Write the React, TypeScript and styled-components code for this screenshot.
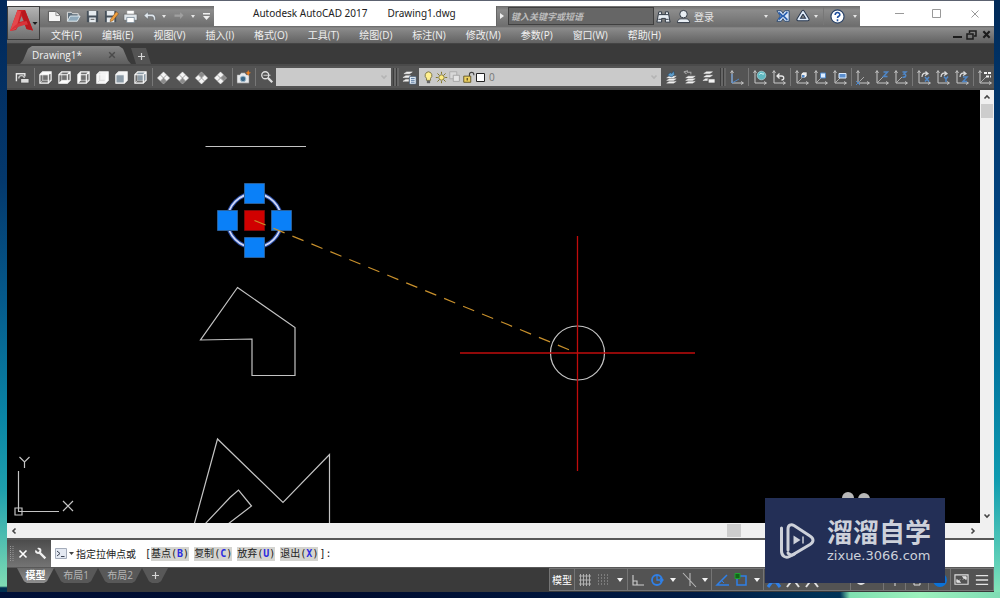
import React from "react";
import styled, { createGlobalStyle, css } from "styled-components";

const uiFont = `"Open Sans", "Noto Sans CJK SC", sans-serif`;
const monoFont = `"DejaVu Sans Mono", "Noto Sans CJK SC", monospace`;

const GlobalStyle = createGlobalStyle`
  * { box-sizing: border-box; }
  body { margin: 0; font-family: ${uiFont}; font-size: 10px; }
  button, input, select { font: inherit; color: inherit; margin: 0; padding: 0; border: 0; background: none; border-radius: 0; }
  svg { display: block; flex: none; }
`;

/* ---------- frame ---------- */

const Desktop = styled.div`
  min-height: 100vh;
  display: flex;
  padding: 0 6px 6px 7px;
  background:
    linear-gradient(30deg, #001038 0%, #000a2c 30%, #001c46 70%, #003358 82%, #00335800 84%) 0 100% / 100% 6px no-repeat,
    linear-gradient(90deg, #00103a 0%, #000a2c 40%, #001c46 70%, #003358 84%, #7fe0b0 85%, #9cf0bc 92%, #7fdcb4 100%) 0 100% / 100% 6px no-repeat,
    linear-gradient(#01285a 0%, #04386c 30%, #055a8c 50%, #0a86a6 70%, #1f9fac 82%, #7fdcb4 98%, #003050 98.3%) 0 0 / 7px 100% no-repeat,
    linear-gradient(#012a58 0%, #014380 35%, #0277a0 62%, #0f9bb0 80%, #5fd0b8 94%, #8ae8b8 100%) 100% 0 / 6px 100% no-repeat,
    #001038;
`;

const Window = styled.main`
  position: relative;
  flex: 1;
  min-width: 0;
  display: flex;
  flex-direction: column;
  background: #3a3a3a;
  border-top: 1px solid #5c6270;
`;

const Header = styled.header`
  display: grid;
  grid-template-columns: 33px 1fr;
  grid-template-rows: 25px 18px;
  background: #fff;
`;

const AppButton = styled.button`
  grid-area: 1 / 1 / 3 / 2;
  z-index: 1;
  margin: 5px 0 4px;
  display: flex;
  align-items: center;
  border: 1px solid #3c3c3c;
  background: linear-gradient(#b4b4b4, #6e6e6e);
`;

const TitleRow = styled.div`
  grid-area: 1 / 2 / 2 / 3;
  display: flex;
  align-items: flex-end;
`;

const barFill = css`
  height: 20px;
  display: flex;
  align-items: center;
  background: linear-gradient(#6e6e6e, #8c8c8c 20%, #6e6e6e);
`;

const QuickAccess = styled.nav`
  ${barFill}
  width: 174px;
  padding-left: 5px;
`;

const ToolButton = styled.button<{ $w?: number }>`
  width: ${(p) => p.$w ?? 19}px;
  height: 18px;
  flex: none;
  display: flex;
  align-items: center;
  justify-content: center;
`;

const Title = styled.h1`
  flex: 1;
  margin: 0;
  padding-left: 39px;
  display: flex;
  gap: 20px;
  font-family: "Noto Sans", sans-serif;
  font-size: 10px;
  font-weight: 400;
  line-height: 25px;
  white-space: nowrap;
  color: #222;
`;

const InfoCenter = styled.div`
  ${barFill}
  width: 364px;
  padding-left: 2px;
  border-left: 1px solid #666;
`;

const Search = styled.input`
  width: 146px;
  height: 18px;
  margin-left: 2px;
  padding-left: 2px;
  border: 1px solid #3f3f3f;
  background: #666;
  font-size: 9px;
  font-style: italic;
  font-weight: 700;
  &::placeholder { color: #bcbcbc; opacity: 1; }
`;

const SignIn = styled.button`
  display: flex;
  align-items: center;
  gap: 3px;
  margin: 0 auto 0 3px;
  color: #e6e6e6;
`;

const WindowButtons = styled.div`
  height: 25px;
  display: flex;
  align-items: center;
  margin-left: 21px;
  color: #999;
`;

const MenuBar = styled.nav`
  grid-area: 2 / 1 / 3 / 3;
  display: flex;
  align-items: center;
  padding-left: 44px;
  gap: 20px;
  background: linear-gradient(#666, #8b8b8b 12%, #626262);
  border-bottom: 1px solid #444;
  color: #f0f0f0;
  white-space: nowrap;
`;

const DocButtons = styled.div`
  margin-left: auto;
  display: flex;
  color: #1c1c1c;
`;

/* ---------- tabs and toolbar ---------- */

const FileTabs = styled.div`
  height: 20px;
  display: flex;
  align-items: flex-end;
  padding-left: 13px;
  background: #3a3a3a;
`;

const FileTab = styled.div`
  width: 111px;
  height: 18px;
  display: flex;
  align-items: center;
  justify-content: space-between;
  padding: 0 15px 0 12px;
  color: #f2f2f2;
  background: linear-gradient(#858585, #5e5e5e);
  clip-path: polygon(0 100%, 3px 80%, 8px 15%, 12px 0, 99px 0, 103px 15%, 108px 80%, 100% 100%);
`;

const NewTab = styled.button`
  width: 20px;
  height: 16px;
  display: flex;
  align-items: center;
  justify-content: center;
  background: #545454;
  clip-path: polygon(0 0, 15px 0, 100% 100%, 5px 100%);
`;

const Toolbar = styled.div`
  height: 26px;
  display: flex;
  align-items: center;
  padding-left: 6px;
  background: #545454;
  border-top: 2px solid #4a4a4a;
  border-bottom: 2px solid #4a4a4a;
  overflow: hidden;
`;

const Sep = styled.span`
  width: 4px;
  height: 18px;
  flex: none;
  background: linear-gradient(#777, #777) 50% / 1px 100% no-repeat;
`;

const Grip = styled.span`
  width: 9px;
  height: 18px;
  flex: none;
  background: repeating-linear-gradient(90deg, #3c3c3c 0 1px, #666 1px 3px) 50% / 6px 100% no-repeat;
`;

const Combo = styled.div<{ $w?: number }>`
  ${(p) => (p.$w ? `width: ${p.$w}px; flex: none;` : "flex: 1; min-width: 0;")}
  height: 18px;
  display: flex;
  align-items: center;
  padding: 0 3px;
  background: #cacaca;
  color: #777;
  select { flex: 1; min-width: 0; height: 18px; appearance: none; outline: 0; font-size: 10px; padding-left: 4px; }
`;

/* ---------- drawing area ---------- */

const Workspace = styled.section`
  flex: 1;
  min-height: 300px;
  display: grid;
  grid-template-columns: 1fr 14px;
  grid-template-rows: 1fr 15px;
  background: #f0f0f0;
`;

const Canvas = styled.div`
  position: relative;
  overflow: hidden;
  background: #000;
  svg { position: absolute; inset: 0; width: 100%; height: 100%; }
`;

const VScroll = styled.div`
  display: flex;
  flex-direction: column;
  justify-content: space-between;
  color: #444;
`;

const HScroll = styled.div`
  grid-column: 1 / 3;
  display: flex;
  align-items: center;
  justify-content: space-between;
  padding: 0 15px 0 0;
  color: #444;
`;

const ScrollButton = styled.button`
  width: 13px;
  height: 14px;
  display: flex;
  align-items: center;
  justify-content: center;
`;

const VThumb = styled.div`
  height: 14px;
  margin: 0 1px auto;
  background: #cdcdcd;
`;

const HThumb = styled.div`
  width: 14px;
  height: 13px;
  margin: 0 225px 0 auto;
  background: #cdcdcd;
`;

/* ---------- command line and status bar ---------- */

const CommandLine = styled.form`
  height: 30px;
  display: flex;
  border-top: 2px solid #585858;
  border-bottom: 1px solid #585858;
  background: #fff;
  font-family: ${monoFont};
  color: #222;
  white-space: nowrap;
`;

const CommandHandle = styled.div`
  width: 44px;
  display: flex;
  align-items: center;
  padding-left: 2px;
  background: linear-gradient(#4c4c4c, #747474);
`;

const CommandText = styled.label`
  display: flex;
  align-items: center;
  padding-left: 4px;
`;

const Options = styled.div`
  display: flex;
  align-items: center;
`;

const Prompt = styled.span`
  padding: 0 9px 0 1px;
`;

const Option = styled.button`
  height: 14px;
  margin-right: 5px;
  line-height: 14px;
  background: #d4d4d0;
  b { color: #2b2be0; }
  &:last-of-type { margin-right: 1px; }
`;

const CommandInput = styled.input`
  flex: 1;
  min-width: 0;
  outline: 0;
`;

const Status = styled.footer`
  height: 24px;
  display: flex;
  align-items: flex-start;
  padding-left: 10px;
  background: #3a3a3a;
`;

const LayoutTab = styled.button<{ $active?: boolean; $w?: number }>`
  width: ${(p) => p.$w ?? 44}px;
  height: 15px;
  line-height: 15px;
  display: flex;
  justify-content: center;
  align-items: center;
  color: ${(p) => (p.$active ? "#fff" : "#b4b4b4")};
  font-weight: ${(p) => (p.$active ? 700 : 400)};
  background: ${(p) => (p.$active ? "linear-gradient(#6a6a6a, #8e8e8e)" : "#585858")};
  clip-path: polygon(0 0, 100% 0, calc(100% - 7px) 88%, calc(100% - 10px) 100%, 10px 100%, 7px 88%);
`;

const StatusTools = styled.div`
  height: 23px;
  margin-left: auto;
  display: flex;
  align-items: center;
  background: #535353;
  border: 1px solid #757575;
`;

const StatusSep = styled.span`
  width: 1px;
  height: 21px;
  background: #757575;
`;

const ModelButton = styled.button`
  width: 24px;
  height: 19px;
  color: #fff;
  white-space: nowrap;
`;

const Watermark = styled.aside`
  position: absolute;
  right: 49px;
  bottom: 9px;
  width: 180px;
  height: 85px;
  display: flex;
  align-items: center;
  gap: 12px;
  padding-left: 14px;
  background: #232f56;
  color: #cdd1da;
`;

const WatermarkName = styled.strong`
  display: block;
  font-family: "Liberation Sans", "Noto Sans CJK SC", sans-serif;
  font-size: 26px;
  line-height: 30px;
  font-weight: 700;
`;

const WatermarkUrl = styled.span`
  display: block;
  font-family: "DejaVu Sans", sans-serif;
  font-size: 13px;
  line-height: 15px;
`;

/* ---------- icons ---------- */

const Ico = ({ children, s = 16 }: { children: React.ReactNode; s?: number }) => (
  <svg width={s} height={s} viewBox="0 0 16 16" fill="none" aria-hidden="true">{children}</svg>
);

const Caret = ({ w = 13 }: { w?: number }) => (
  <ToolButton $w={w} aria-label="More options" type="button">
    <svg width="6" height="4" viewBox="0 0 6 4"><path d="M0 0h6L3 4z" fill="#f2f2f2" /></svg>
  </ToolButton>
);

const SmallCaret = () => (
  <ToolButton $w={10} aria-label="More" type="button">
    <svg width="4" height="3" viewBox="0 0 4 3"><path d="M0 0h4L2 3z" fill="#e6e6e6" /></svg>
  </ToolButton>
);

const Chevron = ({ r = 0, c = "currentColor" }: { r?: number; c?: string }) => (
  <svg width="8" height="8" viewBox="0 0 8 8" fill="none" aria-hidden="true">
    <path d="M1.500 5.500L4 3l2.500 2.500" stroke={c} strokeWidth="1.600" transform={`rotate(${r} 4 4)`} />
  </svg>
);

const Plus = () => (
  <svg width="9" height="9" viewBox="0 0 9 9" aria-hidden="true"><path d="M4.500 1v7M1 4.500h7" stroke="#d6d6d6" strokeWidth="1.200" /></svg>
);

const cubeFaces: Record<string, string> = {
  top: "M2 5L5 2h9l-3 3z",
  bottom: "M2 14L5 11h9l-3 3z",
  left: "M2 5L5 2v9L2 14z",
  right: "M11 5l3-3v9l-3 3z",
  front: "M2 5h9v9H2z",
  back: "M5 2h9v9H5z",
};

const Cube = ({ face }: { face: string }) => (
  <Ico s={15}>
    <path d="M2 5L5 2h9v9l-3 3H2z" fill={face === "front" || face === "right" ? "#f4f4f4" : "#707070"} />
    {face !== "front" && <path d="M5 2v9h9M5 11l-3 3" stroke="#d0d0d0" strokeWidth=".8" />}
    <path d={cubeFaces[face]} fill={face === "front" || face === "back" ? "#8b9aa6" : "#fff"} />
    <path d="M2 5h9v9H2zM2 5l3-3h9v9l-3 3M11 5l3-3" stroke="#f8f8f8" strokeWidth="1.200" />
  </Ico>
);

/* A tilted cube seen as four tiles, one of them shaded. */
const isoTiles = ["M8 2l3 3-3 3-3-3z", "M11.500 5.500l3 3-3 3-3-3z", "M8 9l3 3-3 3-3-3z", "M4.500 5.500l3 3-3 3-3-3z"];

const Iso = ({ dark }: { dark: number }) => (
  <Ico s={15}>
    {isoTiles.map((d, i) => (
      <path key={d} d={d} fill={i === dark ? "#8a8a8a" : "#f4f4f4"} stroke={i === dark ? "#d0d0d0" : "#f4f4f4"} strokeWidth=".5" />
    ))}
  </Ico>
);

const Axes = ({ children }: { children?: React.ReactNode }) => (
  <Ico s={16}>
    <path d="M3 2v12h11" stroke="#c8c8c8" />
    <path d="M1.500 4L3 1.500 4.500 4M12 12.500l2.500 1.500-2.500 1.500" stroke="#c8c8c8" strokeWidth=".9" />
    {children}
  </Ico>
);

const blue = "#4f86c6";
const Diag = () => <path d="M3 14l6-6" stroke="#b4b4b4" strokeWidth=".9" />;
const Turn = () => <path d="M6 8c0-4 3-4.500 5-3.500M9.500 2.500L12 4.700 9 6.500" stroke="#dcdcdc" strokeWidth="1.200" />;
const AxisX = () => <path d="M9 8l4 4.500M13 8l-4 4.500" stroke={blue} strokeWidth="1.500" />;
const AxisY = () => <path d="M9 7.500l2 2.500 2-2.500M11 10v3" stroke={blue} strokeWidth="1.500" />;
const AxisZ = () => <path d="M9 8h4l-4 4.500h4" stroke={blue} strokeWidth="1.500" />;

const LayerStack = () => (
  <path d="M3 9l3-2h8l-3 2zM3 12l3-2h8l-3 2zM3 15l3-2h8l-3 2z" fill="#f0f0f0" stroke="#f0f0f0" strokeWidth=".4" />
);

const Cross = ({ c = "currentColor", s = 10, w = 1.5 }: { c?: string; s?: number; w?: number }) => (
  <svg width={s} height={s} viewBox="0 0 10 10" aria-hidden="true"><path d="M1.500 1.500l7 7M8.500 1.500l-7 7" stroke={c} strokeWidth={w} /></svg>
);

/* ---------- data ---------- */

const menus = ["文件(F)", "编辑(E)", "视图(V)", "插入(I)", "格式(O)", "工具(T)", "绘图(D)", "标注(N)", "修改(M)", "参数(P)", "窗口(W)", "帮助(H)"];

const quickTools: [string, React.ReactNode][] = [
  ["New", <><path d="M1.500 2.500h8l5 4.500v6.500h-13z" fill="#f4f4f4" stroke="#505050" /><path d="M9.500 2.500V7h5" stroke="#888" /></>],
  ["Open", <><path d="M1.500 13V3.500h4L7 5h6v3" fill="#5f6f7c" stroke="#e4e4e4" /><path d="M4.500 7.500H15L12 13H1.500z" fill="#8fa9bb" stroke="#e4edf2" /></>],
  ["Save", <><path d="M2 2h12v12H2z" fill="#46505a" /><path d="M4 2h8v5H4zM4.500 9h7v5h-7z" fill="#e6ebef" /><path d="M6 11h4" stroke="#555" /></>],
  ["Save As", <><path d="M1 2h12v12H1z" fill="#46505a" /><path d="M3 2h8v5H3zM3 9h8v5H3z" fill="#e6ebef" /><path d="M7 11l6-8 2.500 2L9.500 12.500 6.500 13.500z" fill="#f0a040" stroke="#704010" strokeWidth=".5" /></>],
  ["Print", <><path d="M4 1.500h8V6H4z" fill="#fff" stroke="#777" strokeWidth=".6" /><path d="M1 5.500h14V12H1z" fill="#dfe5ea" stroke="#555" strokeWidth=".6" /><path d="M4 9h8v5.500H4z" fill="#fff" stroke="#6f8090" strokeWidth=".8" /></>],
  ["Undo", <path d="M2 7l4.500-4v2.500H10c3.500 0 4.500 2 4.500 6.500h-2c0-3-.5-4-2.500-4H6.500V11z" fill="#dfe6ec" stroke="#565c62" strokeWidth=".5" />],
];

const viewFaces = ["top", "bottom", "left", "right", "front", "back"];

const ucsGroups: [string, React.ReactNode][][] = [
  [["World UCS", <><circle cx="9.500" cy="6.500" r="4.300" fill="#5fb8c0" stroke="#bfe6ea" strokeWidth=".6" /><path d="M7.500 5.500c2-3 3 1 4.500-1" stroke="#e8ffff" /></>],
   ["Previous UCS", <path d="M6.500 7h4c3 0 3 4 0 4M8.500 4.500L6 7l2.500 2.500" stroke="#e8e8e8" strokeWidth="1.300" />]],
  [["Face UCS", <><Diag /><path d="M7 5l2-2h4v4l-2 2H7z" fill="#eee" stroke="#444" strokeWidth=".6" /><path d="M8 6h2.500v2.500H8z" fill={blue} /></>],
   ["Object UCS", <><Diag /><path d="M7.500 4h5v5h-5z" fill="#dcecff" stroke={blue} /></>],
   ["View UCS", <><Diag /><path d="M7 4.500h7V9H7z" fill="#5b8fd0" stroke="#dcecff" /></>]],
  [["Origin", <><Diag /><path d="M1 12l4 4M5 12l-4 4" stroke={blue} /></>],
   ["Z Axis Vector", <><Diag /><path d="M9.500 3h4l-4 4.500h4" stroke={blue} strokeWidth="1.500" /></>],
   ["3 Point", <><Diag /><path d="M9.500 3h3.500l-2 2c3 0 2 4-1.500 3" stroke={blue} strokeWidth="1.500" /></>]],
  [["Rotate X", <><Turn /><AxisX /></>], ["Rotate Y", <><Turn /><AxisY /></>], ["Rotate Z", <><Turn /><AxisZ /></>]],
];

const commandOptions: [string, string][] = [["基点", "B"], ["复制", "C"], ["放弃", "U"], ["退出", "X"]];

/* ---------- page ---------- */

const Drawing = () => (
  <Canvas role="img" aria-label="Drawing area">
    <svg fill="none" stroke="#c4c4c4" strokeWidth="1.200">
      <g transform="translate(-7 -90)">
        <path d="M205.500 146.500H306" />
        <path d="M237.500 287.500L295 327.500V375.500H252V339L200.500 340z" />
        <path d="M194 525L217.500 439L283 502.500L329.500 454.500V525" />
        <path d="M205 524L230 497.500L238.500 490L251.500 506L228 524" />
        <circle cx="254.500" cy="220.500" r="27" stroke="#2448a0" strokeWidth="4" />
        <circle cx="254.500" cy="220.500" r="27" stroke="#d0d8f8" strokeWidth="1.800" />
        <g fill="#0a80f8" stroke="#2a5f98" strokeWidth="1">
          <path d="M244.500 183.500h20v20h-20zM217.500 210.500h20v20h-20zM271.500 210.500h20v20h-20zM244.500 237.500h20v20h-20z" />
          <path d="M244.500 210.500h20v20h-20z" fill="#d00000" stroke="#800808" />
        </g>
        <path d="M254.500 220.500L577 353" stroke="#c8902c" strokeDasharray="12 8.500" />
        <circle cx="577.500" cy="353" r="27" />
        <path d="M577.500 236V471M460 353H695" stroke="#c00c0c" strokeWidth="1.300" />
        <path d="M18.500 471V511.500H59M15 508h7v7h-7zM19.500 457l5 5 5-5M24.500 462v6M63 501l10 10M73 501l-10 10" />
        <g fill="#b8b8b8" stroke="none">
          <ellipse cx="848" cy="498" rx="6" ry="6" />
          <ellipse cx="864" cy="499" rx="6" ry="6" />
        </g>
      </g>
    </svg>
  </Canvas>
);

const StatusIcon = ({ label, children }: { label: string; children: React.ReactNode }) => (
  <ToolButton $w={19} aria-label={label} type="button"><Ico>{children}</Ico></ToolButton>
);

const person = "M8 3v4l-6 8M8 7l6 8M4 10h8";

export default function App() {
  return (
    <Desktop>
      <GlobalStyle />
      <Window>
        <Header>
          <AppButton aria-label="Application menu">
            <svg width="31" height="32" viewBox="0 0 31 32" aria-hidden="true">
              <path d="M2 24L9.500 3H17l8 20.500-6.500-1.500-2-5-5.500 1-3 5z" fill="#cf2026" />
              <path d="M9.500 3L13 4.500 10 15l-2 7-6 2z" fill="#e4484c" />
              <path d="M17 3l8 20.500-6.500-1.500L13 5z" fill="#b8181e" />
              <path d="M13.500 9l-2 6 4-1z" fill="#8f8f8f" />
              <path d="M3.500 22c4-5 9-7 15-8l1.500 3.500C14 18 9 20 2 24z" fill="#d8343a" />
              <path d="M24.500 15h5L27 18z" fill="#1c1c1c" />
            </svg>
          </AppButton>
          <TitleRow>
            <QuickAccess aria-label="Quick access">
              {quickTools.map(([label, art]) => (
                <ToolButton key={label} aria-label={label}><Ico s={15}>{art}</Ico></ToolButton>
              ))}
              <SmallCaret />
              <ToolButton aria-label="Redo"><Ico s={12}><path d="M14 7l-4.500-4v3H2v3h7.500v3z" fill="#a0a0a0" /></Ico></ToolButton>
              <SmallCaret />
              <ToolButton $w={16} aria-label="Customize">
                <svg width="7" height="7" viewBox="0 0 7 7"><path d="M0 0h7v1.500H0zM0 3h7L3.500 7z" fill="#f0f0f0" /></svg>
              </ToolButton>
            </QuickAccess>
            <Title><span>Autodesk AutoCAD 2017</span><span>Drawing1.dwg</span></Title>
            <InfoCenter>
              <svg width="7" height="8" viewBox="0 0 7 8" aria-hidden="true"><path d="M1 1l4 3-4 3z" fill="#f0f0f0" /></svg>
              <Search aria-label="Search" placeholder="键入关键字或短语" />
              <ToolButton aria-label="Find">
                <Ico s={15}><path d="M3 3h3v3h4V3h3l2 11h-5v-4H6v4H1z" fill="#e8eef4" stroke="#2c3440" /><path d="M3 6h3M10 6h3M2.500 11h3M10.500 11h3" stroke="#2c3440" /></Ico>
              </ToolButton>
              <SignIn>
                <Ico s={15}><circle cx="8" cy="5.500" r="4" fill="#e8eef4" stroke="#2c3440" /><path d="M1.500 14.500c0-4.500 4-4 6.500-4s6.500-.5 6.500 4z" fill="#e8eef4" stroke="#2c3440" /></Ico>
                登录
              </SignIn>
              <SmallCaret />
              <ToolButton $w={24} aria-label="Exchange">
                <Ico s={14}><path d="M1 2h5l2 3 2-3h5v12h-5l-2-3-2 3H1l4-6z" fill="#dbe8fa" stroke="#20406c" /><path d="M3 4l4.500 4L3 12M13 3.500L8.500 8l4.500 4.500" stroke="#2a60b0" strokeWidth="2" /></Ico>
              </ToolButton>
              <ToolButton $w={16} aria-label="Cloud services">
                <Ico s={14}><path d="M8 3L2.500 12h11z" stroke="#24344c" strokeWidth="4" strokeLinejoin="round" /><path d="M8 3L2.500 12h11z" stroke="#e0ecfa" strokeWidth="1.800" strokeLinejoin="round" /></Ico>
              </ToolButton>
              <SmallCaret />
              <Sep />
              <ToolButton $w={25} aria-label="Help">
                <svg width="15" height="15" viewBox="0 0 16 16" fill="none"><circle cx="8" cy="8" r="7" fill="#fff" stroke="#2c4468" strokeWidth="1.300" /><path d="M5.500 6.500c0-3.500 5-3.500 5-.5 0 2-2.500 1.500-2.500 3.500M8 11v2" stroke="#1f4fa0" strokeWidth="1.700" /></svg>
              </ToolButton>
              <SmallCaret />
            </InfoCenter>
            <WindowButtons>
              <ToolButton $w={37} aria-label="Minimize"><svg width="9" height="9"><path d="M0 4.500h9" stroke="#999" /></svg></ToolButton>
              <ToolButton $w={37} aria-label="Maximize"><svg width="9" height="9"><path d="M.5.5h8v8h-8z" fill="none" stroke="#999" /></svg></ToolButton>
              <ToolButton $w={39} aria-label="Close"><Cross c="#999" w={1} /></ToolButton>
            </WindowButtons>
          </TitleRow>
          <MenuBar>
            {menus.map((m) => <button key={m}>{m}</button>)}
            <DocButtons>
              <ToolButton $w={13} aria-label="Minimize drawing"><svg width="9" height="9"><path d="M0 7h9" stroke="currentColor" strokeWidth="2" /></svg></ToolButton>
              <ToolButton $w={14} aria-label="Restore drawing"><svg width="11" height="10" fill="none"><path d="M3.500 3V1H10v5H8M1 4h6v5H1z" stroke="currentColor" strokeWidth="1.500" /></svg></ToolButton>
              <ToolButton $w={16} aria-label="Close drawing"><Cross s={9} w={2.4} /></ToolButton>
            </DocButtons>
          </MenuBar>
        </Header>

        <FileTabs>
          <FileTab><span>Drawing1*</span><Cross c="#4a4a4a" s={8} w={1.8} /></FileTab>
          <NewTab aria-label="New drawing"><Plus /></NewTab>
        </FileTabs>

        <Toolbar role="toolbar">
          <ToolButton aria-label="Named views"><Ico s={15}><path d="M1.500 12V4h9v3" stroke="#e8e8e8" strokeWidth="1.500" /><path d="M4 9c0-4 6-4 6 0" stroke="#c8c8c8" strokeWidth="1.500" /><path d="M6 9h9v5H6z" fill="#ddd" stroke="#444" /></Ico></ToolButton>
          <Sep />
          {viewFaces.map((f) => <ToolButton key={f} aria-label={`${f} view`}><Cube face={f} /></ToolButton>)}
          <Sep />
          {["SW", "SE", "NE", "NW"].map((n, i) => <ToolButton key={n} aria-label={`${n} isometric`}><Iso dark={[2, 2, 0, 1][i]} /></ToolButton>)}
          <Sep />
          <ToolButton aria-label="Create camera"><Ico s={15}><path d="M1 5h3l1.500-2h4L11 5h3v9H1z" fill="#e8eaec" stroke="#555" strokeWidth=".5" /><circle cx="7.500" cy="9.500" r="3" fill="#3c6888" stroke="#a8c0d0" /><path d="M13 0l1 2.500 2 .5-2 1-1 2.500-1-2.500-2-1 2-.5z" fill="#f08020" /></Ico></ToolButton>
          <Sep />
          <ToolButton aria-label="Zoom"><Ico s={14}><circle cx="6" cy="6" r="4" stroke="#e0e0e0" strokeWidth="1.500" /><path d="M9 9l5 5" stroke="#e0e0e0" strokeWidth="2.500" /><path d="M4 6h8" stroke="#e0e0e0" /></Ico></ToolButton>
          <Combo $w={115}><select aria-label="View" /><Chevron r={180} c="#b4b4b4" /></Combo>
          <Grip />
          <ToolButton aria-label="Layer properties"><Ico s={15}><path d="M2 4l3-2h6L8 4zM1 8l3-2h5L7 8zM1 12l3-2h3v2z" fill="#f0f0f0" stroke="#f0f0f0" strokeWidth=".5" /><path d="M8 7h7v8H8z" fill="#e8f0f8" stroke="#3c5878" strokeWidth=".6" /><path d="M9.500 9h4M9.500 11h4M9.500 13h4" stroke="#4f7098" /></Ico></ToolButton>
          <Combo>
            <Ico s={13}><path d="M8 1a4.500 4.500 0 0 0-2.500 8v2.500h5V9A4.500 4.500 0 0 0 8 1z" fill="#fff090" stroke="#6a6230" /><path d="M6 12h4v3H6z" fill="#666" /></Ico>
            <Ico s={13}><circle cx="8" cy="8" r="3.300" fill="#ffec80" stroke="#6a6230" /><path d="M8 1v2.500M8 12.500V15M1 8h2.500M12.500 8H15M3 3l2 2M13 3l-2 2M3 13l2-2M13 13l-2-2" stroke="#807428" strokeWidth="1.200" /></Ico>
            <Ico s={14}><path d="M2 2h8v8H2z" fill="#d8d8d8" stroke="#a8a8a8" /><path d="M6 6h7v7H6z" fill="#e4e4e4" stroke="#a0a0a0" /></Ico>
            <Ico s={14}><path d="M8.500 8V5c0-3 5-3 5 0v1" stroke="#444" strokeWidth="1.300" /><path d="M2 7h8v7H2z" fill="#ecd060" stroke="#5c5020" /><path d="M6 9v3" stroke="#5c5020" strokeWidth="1.500" /></Ico>
            <svg width="9" height="9" aria-hidden="true"><path d="M.5.5h8v8h-8z" fill="#fff" stroke="#222" /></svg>
            <select aria-label="Layer"><option>0</option></select>
            <Chevron r={180} c="#b4b4b4" />
          </Combo>
          <ToolButton aria-label="Make current"><Ico s={14}><LayerStack /><path d="M4 6l3-3 2 1 2-3 1 4-3 3z" fill="#5f9cc8" stroke="#24486c" strokeWidth=".6" /></Ico></ToolButton>
          <ToolButton aria-label="Previous layer"><Ico s={14}><LayerStack /><path d="M1 2l4-1v1.500h4V5M1 2l3 2.500" stroke="#a8a8a8" strokeWidth="1.200" /></Ico></ToolButton>
          <ToolButton aria-label="Layer states"><Ico s={14}><path d="M2 4l3-2h7L9 4zM2 8l3-2h7L9 8zM1 12l3-2h4v2z" fill="#f0f0f0" stroke="#f0f0f0" strokeWidth=".5" /><path d="M7 10h8v5H7z" fill="#f4f4f4" stroke="#444" /></Ico></ToolButton>
          <Grip />
          <ToolButton aria-label="UCS"><Axes><path d="M3 14l7-4" stroke={blue} /><path d="M3 5v9" stroke="#5b93d8" /></Axes></ToolButton>
          {ucsGroups.map((group, i) => (
            <React.Fragment key={i}>
              <Sep />
              {group.map(([label, art]) => <ToolButton key={label} aria-label={label}><Axes>{art}</Axes></ToolButton>)}
            </React.Fragment>
          ))}
          <Sep />
          <ToolButton aria-label="Apply UCS"><Axes><Diag /><path d="M7 4h7M9 7.500h5" stroke="#f4f4f4" strokeWidth="2" strokeDasharray="3 1" /></Axes></ToolButton>
        </Toolbar>

        <Workspace>
          <Drawing />
          <VScroll>
            <ScrollButton aria-label="Scroll up"><Chevron /></ScrollButton>
            <VThumb />
            <ScrollButton aria-label="Scroll down"><Chevron r={180} /></ScrollButton>
          </VScroll>
          <HScroll>
            <ScrollButton aria-label="Scroll left"><Chevron r={-90} /></ScrollButton>
            <HThumb />
            <ScrollButton aria-label="Scroll right"><Chevron r={90} /></ScrollButton>
          </HScroll>
        </Workspace>

        <CommandLine onSubmit={(e) => e.preventDefault()}>
          <CommandHandle>
            <svg width="5" height="16" viewBox="0 0 5 16" aria-hidden="true"><path d="M1.500 0v16M4 0v16" stroke="#999" strokeDasharray="1 1" /></svg>
            <ToolButton $w={17} aria-label="Close command line" type="button"><Cross c="#fff" w={1.6} /></ToolButton>
            <ToolButton aria-label="Customize command line" type="button">
              <Ico s={13}><path d="M6 6l8 8" stroke="#f0f0f0" strokeWidth="2.800" /><path d="M2 3.500l3 3 2-2-3-3c3-1.500 6 1 5 4s-4 3.500-6 2.500S1 5.500 2 3.500z" fill="#f0f0f0" /></Ico>
            </ToolButton>
          </CommandHandle>
          <CommandText htmlFor="command">
            <svg width="12" height="12" viewBox="0 0 12 12" aria-hidden="true"><path d="M.5.5h11v10H.5z" fill="#e4e9f2" stroke="#a4acba" /><path d="M2 3l3 2.500L2 8M6 8.500h3.500" fill="none" stroke="#3c4454" /></svg>
            <svg width="8" height="4" viewBox="0 0 8 4" aria-hidden="true"><path d="M2 0h5L4.500 3z" fill="#444" /></svg>
            <Prompt>指定拉伸点或</Prompt>[
          </CommandText>
          <Options>
            {commandOptions.map(([name, key]) => (
              <Option key={key} type="button">{name}(<b>{key}</b>)</Option>
            ))}
            <span>]:</span>
          </Options>
          <CommandInput id="command" />
        </CommandLine>

        <Status>
          <LayoutTab $active $w={37}>模型</LayoutTab>
          <LayoutTab>布局1</LayoutTab>
          <LayoutTab>布局2</LayoutTab>
          <LayoutTab $w={26} aria-label="New layout"><Plus /></LayoutTab>
          <StatusTools>
            <ModelButton>模型</ModelButton>
            <StatusSep />
            <StatusIcon label="Grid"><path d="M3.500 2v12M6.500 2v12M9.500 2v12M12.500 2v12M2 4h12M2 8h12M2 12h12" stroke="#b8b8b8" strokeWidth=".9" /></StatusIcon>
            <StatusIcon label="Snap"><path d="M2 3h12M2 6h12M2 9h12M2 12h12" stroke="#a8a8a8" strokeDasharray="1 2" /></StatusIcon>
            <Caret w={14} />
            <StatusSep />
            <StatusIcon label="Ortho"><path d="M3 3v10h11M3 9h4v4" stroke="#d0d0d0" strokeWidth="1.100" /></StatusIcon>
            <StatusIcon label="Polar"><circle cx="8" cy="8" r="5" stroke="#2f80e8" strokeWidth="1.800" /><path d="M8 3v5h6M11 6l3 2-3 2" stroke="#2f80e8" strokeWidth="1.300" /></StatusIcon>
            <Caret />
            <StatusIcon label="Isodraft"><path d="M2 1l13 14M9 1v13" stroke="#b8b8b8" strokeWidth="1.100" /></StatusIcon>
            <Caret />
            <StatusSep />
            <StatusIcon label="Object tracking"><path d="M13 3L3 13h12" stroke="#2f80e8" strokeWidth="1.500" /><path d="M7 8l3 3" stroke="#2f80e8" /></StatusIcon>
            <StatusIcon label="Object snap"><path d="M4 4h9v9H4z" stroke="#2f80e8" strokeWidth="1.500" /><path d="M2 1.500h5v5H2z" fill="#106818" stroke="#20a030" /></StatusIcon>
            <Caret />
            <StatusSep />
            <StatusIcon label="Annotation visibility"><path d={person} stroke="#2f80e8" strokeWidth="3" /></StatusIcon>
            <StatusIcon label="Auto scale"><path d={person} stroke="#e0e0e0" strokeWidth="2" /></StatusIcon>
            <StatusIcon label="Annotation scale"><path d={person} stroke="#e0e0e0" strokeWidth="2" /></StatusIcon>
            <Caret w={29} />
            <StatusSep />
            <StatusIcon label="Workspace"><circle cx="8" cy="8" r="4" stroke="#e0e0e0" strokeWidth="2" /></StatusIcon>
            <Caret />
            <StatusSep />
            <ToolButton $w={21} aria-label="Monitor"><Ico><path d="M8 2v12M2 8h12" stroke="#e0e0e0" /></Ico></ToolButton>
            <StatusSep />
            <ToolButton $w={22} aria-label="Isolate"><Ico><path d="M5 4h6v9H5z" stroke="#e0e0e0" /></Ico></ToolButton>
            <StatusSep />
            <ToolButton $w={21} aria-label="Performance"><Ico><circle cx="8" cy="8" r="7" fill="#0a72d8" /></Ico></ToolButton>
            <StatusSep />
            <ToolButton $w={20} aria-label="Clean screen"><Ico s={15}><path d="M1 3h14v10H1z" stroke="#e0e0e0" strokeWidth="1.200" /><path d="M9 5h4v3zM7 11H3V8zM12 5.500L9.500 8M4 10.500L6.500 8" fill="#e0e0e0" stroke="#e0e0e0" /></Ico></ToolButton>
            <ToolButton $w={22} aria-label="Customization"><Ico s={14}><path d="M1 3h14M1 8h14M1 13h14" stroke="#e4e4e4" strokeWidth="1.600" /></Ico></ToolButton>
          </StatusTools>
        </Status>

        <Watermark>
          <svg width="36" height="38" viewBox="0 0 36 38" fill="none" stroke="#cdd1da" strokeWidth="3" strokeLinecap="round" aria-hidden="true">
            <path d="M9 28V7c0-4 3-5 6-3.500L31 14c4 2.500 4 6 0 8.500L15 32c-2 1.500-5 1-6-1" />
            <path d="M2.500 6v23c0 5 4 7.500 8 5.500l5-2.500" />
            <path d="M14.500 13.500v9l7-4.500z" fill="#cdd1da" stroke="none" />
            <path d="M24 15v6" strokeWidth="1.500" />
          </svg>
          <div>
            <WatermarkName>溜溜自学</WatermarkName>
            <WatermarkUrl>zixue.3066.com</WatermarkUrl>
          </div>
        </Watermark>
      </Window>
    </Desktop>
  );
}
